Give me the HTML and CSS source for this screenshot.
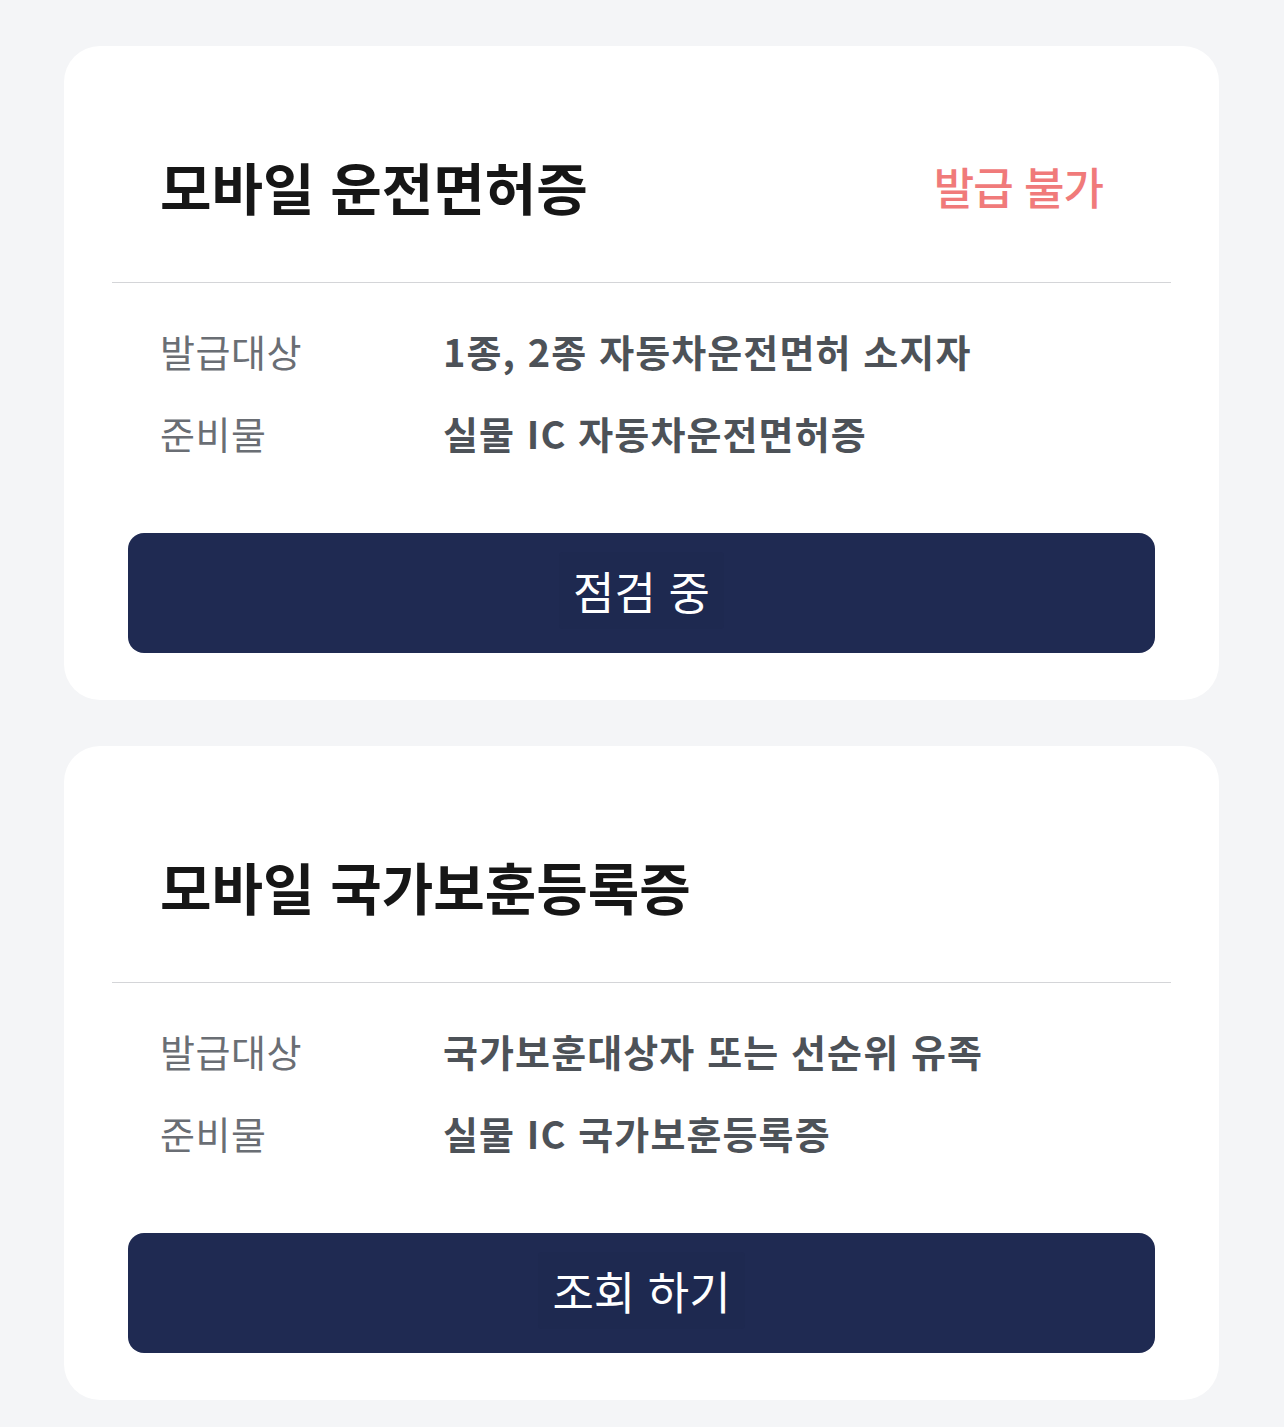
FILE: index.html
```html
<!DOCTYPE html>
<html lang="ko">
<head>
  <meta charset="utf-8">
  <title>모바일 신분증</title>
  <link rel="stylesheet" href="styles.css">
</head>
<body>
  <div class="card-list">
    <div class="card">
      <div class="card-header">
        <h2 class="card-title">모바일 운전면허증</h2>
        <span class="card-status">발급 불가</span>
      </div>
      <div class="card-info">
        <div class="info-row">
          <span class="info-label">발급대상</span>
          <span class="info-value">1종, 2종 자동차운전면허 소지자</span>
        </div>
        <div class="info-row">
          <span class="info-label">준비물</span>
          <span class="info-value">실물 IC 자동차운전면허증</span>
        </div>
      </div>
      <button type="button" class="card-button"><span>점검 중</span></button>
    </div>

    <div class="card">
      <div class="card-header">
        <h2 class="card-title">모바일 국가보훈등록증</h2>
      </div>
      <div class="card-info">
        <div class="info-row">
          <span class="info-label">발급대상</span>
          <span class="info-value">국가보훈대상자 또는 선순위 유족</span>
        </div>
        <div class="info-row">
          <span class="info-label">준비물</span>
          <span class="info-value">실물 IC 국가보훈등록증</span>
        </div>
      </div>
      <button type="button" class="card-button"><span>조회 하기</span></button>
    </div>
  </div>
</body>
</html>
```

FILE: styles.css
```css
body {
  margin: 0;
  background-color: #f4f5f7;
  font-family: 'Noto Sans CJK KR', 'Noto Sans', sans-serif;
}

.card-list {
  display: flex;
  flex-direction: column;
  gap: 46px;
  padding: 46px 65px 27px 64px;
}

.card {
  background-color: #ffffff;
  border-radius: 36px;
  padding: 0 48px 47px 48px;
  display: flex;
  flex-direction: column;
}

.card-header {
  display: flex;
  justify-content: space-between;
  align-items: center;
  padding: 100px 68px 56px 48px;
  border-bottom: 1px solid #d4d5d8;
}

.card-title {
  margin: 0;
  font-size: 56px;
  line-height: 80px;
  font-weight: 700;
  color: #161616;
}

.card-status {
  font-size: 44px;
  line-height: 80px;
  font-weight: 500;
  color: #f07a7a;
  letter-spacing: -1px;
}

.card-info {
  padding: 27px 48px 0 48px;
}

.info-row {
  display: flex;
  line-height: 82px;
}

.info-label {
  width: 283px;
  flex-shrink: 0;
  font-size: 38px;
  color: #6a6e74;
  letter-spacing: 0.5px;
}

.info-value {
  font-size: 38px;
  font-weight: 700;
  color: #4d5258;
  letter-spacing: 1.1px;
}

.card-button {
  margin: 59px 16px 0 16px;
  height: 120px;
  border: none;
  border-radius: 16px;
  background-color: #1f2a52;
  color: #ffffff;
  font-family: inherit;
  font-size: 45px;
  cursor: pointer;
}

.card-button span {
  background-color: #1e2950;
  padding: 6px 14px;
  border-radius: 4px;
  position: relative;
  top: -3px;
}
```
